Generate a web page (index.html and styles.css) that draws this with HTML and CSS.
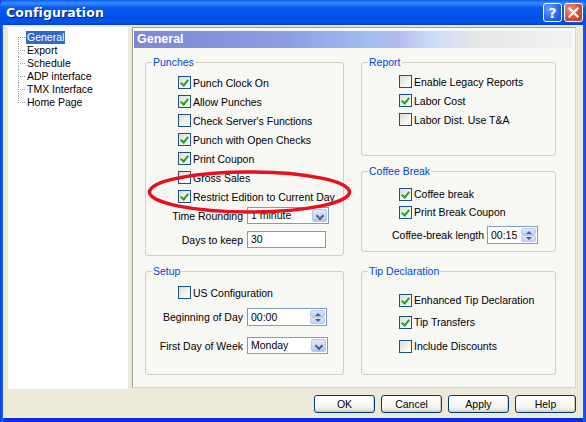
FILE: index.html
```html
<!DOCTYPE html>
<html>
<head>
<meta charset="utf-8">
<link rel="stylesheet" href="styles.css">
</head>
<body>
<div class="win">
  <div class="titlebar">
    <span class="title">Configuration</span>
    <span class="tbtn help">?</span>
    <span class="tbtn close"><svg width="11" height="11" viewBox="0 0 11 11"><path d="M1.5 1.5 L9.5 9.5 M9.5 1.5 L1.5 9.5" stroke="#fff" stroke-width="2.2" stroke-linecap="square"/></svg></span>
  </div>
  <div class="client">
    <div class="main">
      <ul class="tree">
        <li><span class="sel">General</span></li>
        <li><span>Export</span></li>
        <li><span>Schedule</span></li>
        <li><span>ADP interface</span></li>
        <li><span>TMX Interface</span></li>
        <li><span>Home Page</span></li>
      </ul>
      <div class="panel">
        <div class="header">General</div>
        <div class="groups">
          <fieldset class="punches">
            <legend>Punches</legend>
            <div class="gbody">
              <div class="cbrow"><span class="cb on"></span>Punch Clock On</div>
              <div class="cbrow"><span class="cb on"></span>Allow Punches</div>
              <div class="cbrow"><span class="cb"></span>Check Server's Functions</div>
              <div class="cbrow"><span class="cb on"></span>Punch with Open Checks</div>
              <div class="cbrow"><span class="cb on"></span>Print Coupon</div>
              <div class="cbrow"><span class="cb"></span>Gross Sales</div>
              <div class="cbrow"><span class="cb on"></span>Restrict Edition to Current Day</div>
            </div>
            <div class="frow r1"><span class="lbl">Time Rounding</span><span class="field sel-w82">1 minute<span class="ddbtn"></span></span></div>
            <div class="frow r2"><span class="lbl">Days to keep</span><span class="field w79">30</span></div>
          </fieldset>
          <fieldset class="report">
            <legend>Report</legend>
            <div class="gbody">
              <div class="cbrow"><span class="cb"></span>Enable Legacy Reports</div>
              <div class="cbrow"><span class="cb on"></span>Labor Cost</div>
              <div class="cbrow"><span class="cb"></span>Labor Dist. Use T&amp;A</div>
            </div>
          </fieldset>
          <fieldset class="coffee">
            <legend>Coffee Break</legend>
            <div class="gbody">
              <div class="cbrow"><span class="cb on"></span>Coffee break</div>
              <div class="cbrow"><span class="cb on"></span>Print Break Coupon</div>
            </div>
            <div class="frow"><span class="lbl">Coffee-break length</span><span class="field spin w51">00:15<span class="spinbtn"><span class="up"></span><span class="dn"></span></span></span></div>
          </fieldset>
          <fieldset class="setup">
            <legend>Setup</legend>
            <div class="gbody">
              <div class="cbrow"><span class="cb"></span>US Configuration</div>
            </div>
            <div class="frow r1"><span class="lbl">Beginning of Day</span><span class="field spin w80">00:00<span class="spinbtn"><span class="up"></span><span class="dn"></span></span></span></div>
            <div class="frow r2"><span class="lbl">First Day of Week</span><span class="field sel-w81">Monday<span class="ddbtn"></span></span></div>
          </fieldset>
          <fieldset class="tip">
            <legend>Tip Declaration</legend>
            <div class="gbody">
              <div class="cbrow"><span class="cb on"></span>Enhanced Tip Declaration</div>
              <div class="cbrow"><span class="cb on"></span>Tip Transfers</div>
              <div class="cbrow"><span class="cb"></span>Include Discounts</div>
            </div>
          </fieldset>
        </div>
      </div>
    </div>
    <div class="buttons">
      <span class="btn">OK</span>
      <span class="btn">Cancel</span>
      <span class="btn">Apply</span>
      <span class="btn">Help</span>
    </div>
  </div>
  <svg class="mark" width="586" height="422" viewBox="0 0 586 422"><ellipse cx="249.5" cy="192" rx="100" ry="20" fill="none" stroke="#E8101C" stroke-width="3.5"/></svg>
</div>
</body>
</html>
```

FILE: styles.css
```css
* { box-sizing: border-box; }
body { margin: 0; font-family: "Liberation Sans", Arial, sans-serif; font-size: 10.5px; color: #000; }
.win { position: relative; width: 586px; height: 422px; display: flex; flex-direction: column; background: linear-gradient(to right, #0831D9, #166AEE 2px, #0831D9 5px, #0831D9 calc(100% - 4px), #166AEE calc(100% - 2px), #0831D9); }
.titlebar { height: 25px; flex: none; display: flex; align-items: center; padding: 0 3px 0 6px; background: linear-gradient(#0A5CF0 0%, #3A8CFF 12%, #0A5AEE 30%, #0050E8 70%, #0052E8 90%, #0040C8 100%); border-radius: 6px 6px 0 0; }
.title { flex: 1; color: #fff; font-family: "DejaVu Sans", sans-serif; font-weight: bold; font-size: 12.5px; text-shadow: 1px 1px 0 #0A1E80; letter-spacing: 0.1px; }
.tbtn { width: 19px; height: 19px; margin-left: 2px; border: 1px solid #fff; border-radius: 3px; display: flex; align-items: center; justify-content: center; color: #fff; font-weight: bold; font-family: "DejaVu Sans", sans-serif; font-size: 14px; }
.help { background: radial-gradient(circle at 30% 30%, #6C9BFF, #2A64E6 60%, #1A48C8); }
.close { background: radial-gradient(circle at 30% 30%, #F0917A, #D8482A 60%, #C03818); }
.client { flex: 1; margin: 0 3px 4px 3px; background: #ECE9D8; padding: 2px 7px 0 5px; display: flex; flex-direction: column; }
.main { display: flex; gap: 4px; height: 362px; }
.tree { width: 120px; margin: 0; padding: 4px 0 0 0; list-style: none; background: #fff; }
.tree li { position: relative; height: 13px; line-height: 13px; padding-left: 18px; }
.tree li span { padding: 0 1px; display: inline-block; height: 13px; }
.tree li .sel { background: #316AC5; color: #fff; }
.tree li::before { content: ""; position: absolute; left: 10px; top: 6px; width: 7px; border-top: 1px dotted #999; }
.tree li::after { content: ""; position: absolute; left: 10px; top: 0; height: 13px; border-left: 1px dotted #999; }
.tree li:first-child::after { top: 6px; height: 7px; }
.tree li:last-child::after { height: 7px; }
.panel { flex: 1; height: 361px; background: #F7F7F4; border: 1px solid #9C9C94; border-right-color: #D8D6C8; border-bottom-color: #D8D6C8; box-shadow: inset 1px 1px 0 #fff; }
.header { margin: 3px 3px 0 1px; height: 17px; line-height: 17px; padding-left: 3px; color: #fff; font-weight: bold; font-size: 12.5px; background: linear-gradient(to right, #7C88D6 0%, #8C9EE0 35%, #A4C0F0 55%, #B8B8EE 60%, #C8DCF8 68%, #E6E6E6 78%, #F2F2F2 100%); }
.groups { display: grid; grid-template-columns: 199px 195px; grid-template-rows: 100px 91px 110px; column-gap: 17px; row-gap: 9px; margin: 8px 0 0 12px; }
fieldset { margin: 0; padding: 0; min-width: 0; border: 1px solid #D0D0BF; border-radius: 3px; }
legend { margin-left: 6px; padding: 0 1px; color: #0046D5; line-height: 13px; height: 13px; }
.punches { grid-row: 1 / 3; }
.punches .gbody { padding: 4px 0 0 32px; }
.report .gbody { padding: 3px 0 0 37px; }
.coffee { height: 87px; align-self: start; }
.coffee .gbody { padding: 7px 0 0 37px; }
.setup .gbody { padding: 5px 0 0 32px; }
.tip .gbody { padding: 11px 0 0 37px; }
.cbrow { height: 19px; display: flex; align-items: center; white-space: nowrap; }
.coffee .cbrow { height: 18px; }
.tip .cbrow { height: 22px; }
.tip .cbrow:last-child { margin-top: 2px; }
.cb { width: 13px; height: 13px; flex: none; margin-right: 2px; border: 1px solid #1C5180; background: linear-gradient(135deg, #DCDCD6, #F4F4F0 60%, #FFFFFF); position: relative; }
.cb.on::after { content: ""; position: absolute; left: 3px; top: 1px; width: 3px; height: 6px; border: solid #21A121; border-width: 0 2px 2px 0; transform: rotate(40deg); }
.frow { display: flex; align-items: center; white-space: nowrap; }
.punches .lbl, .setup .lbl { width: 97px; margin-right: 4px; }
.coffee .frow { margin-top: 5px; }
.coffee .lbl { width: 122px; margin-right: 3px; }
.lbl { text-align: right; }
.punches .r1 { margin-top: 1px; }
.punches .r2 { margin-top: 7px; }
.setup .r1 { margin-top: 6px; }
.setup .r2 { margin-top: 11px; }
.field { position: relative; height: 17px; line-height: 15px; border: 1px solid #7F9DB9; background: #fff; padding-left: 3px; display: block; }
.spin { height: 18px; line-height: 16px; }
.sel-w82 { width: 82px; }
.sel-w81 { width: 81px; }
.w79 { width: 79px; }
.w80 { width: 80px; }
.w51 { width: 51px; }
.ddbtn { position: absolute; right: 1px; top: 1px; bottom: 1px; width: 15px; border: 1px solid #B5C8F2; border-radius: 2px; background: linear-gradient(#E0E8FE, #C4D4FA 60%, #B0C4F4); }
.ddbtn::after { content: ""; position: absolute; left: 4px; top: 3px; width: 4px; height: 4px; border: solid #4D6185; border-width: 0 2px 2px 0; transform: rotate(45deg); }
.spinbtn { position: absolute; right: 1px; top: 1px; bottom: 1px; width: 15px; display: flex; flex-direction: column; }
.spinbtn span { flex: 1; position: relative; border: 1px solid #B5C8F2; border-radius: 2px; background: linear-gradient(#E0E8FE, #C0D0F8); }
.spinbtn .up::after { content: ""; position: absolute; left: 4px; top: 2px; border: 3px solid transparent; border-top: 0; border-bottom: 3px solid #4D6185; }
.spinbtn .dn::after { content: ""; position: absolute; left: 4px; top: 1px; border: 3px solid transparent; border-bottom: 0; border-top: 3px solid #4D6185; }
.buttons { display: flex; justify-content: flex-end; gap: 6px; margin-top: 6px; }
.btn { width: 61px; height: 18px; line-height: 16px; text-align: center; border: 1px solid #003C74; border-radius: 3px; background: linear-gradient(#FFFFFF, #F4F4F0 70%, #D8D6CC); box-shadow: inset -1px -1px 0 #D6D0C0; }
.mark { position: absolute; left: 0; top: 0; pointer-events: none; }
```
